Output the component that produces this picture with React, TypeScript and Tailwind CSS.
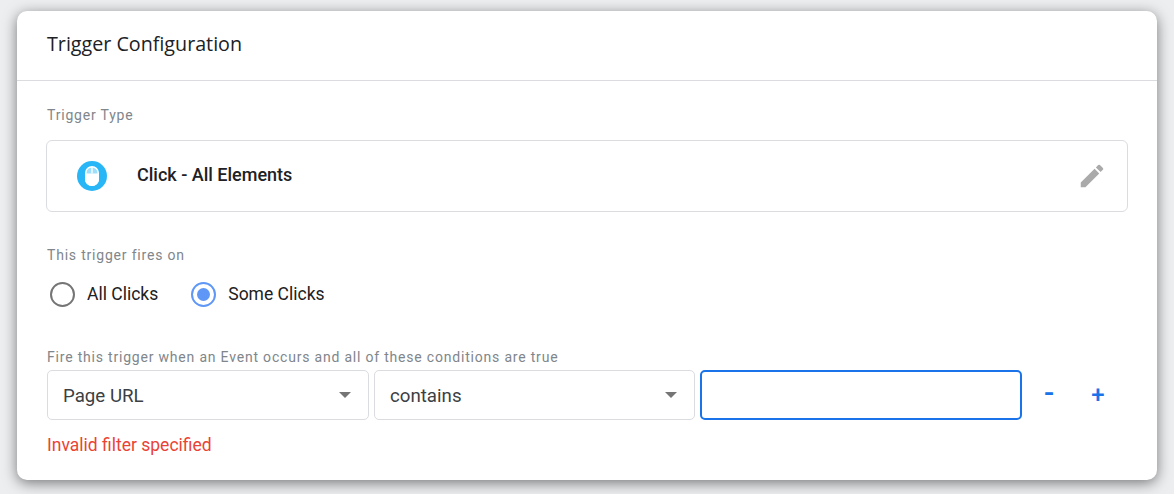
import React from "react";

function Radio({ label, checked }: { label: string; checked?: boolean }) {
  return (
    <div className="flex items-center">
      <div
        className={
          checked
            ? "w-[25px] h-[25px] rounded-full border-2 border-[#5e97f6] flex items-center justify-center"
            : "w-[25px] h-[25px] rounded-full border-2 border-[#757575] flex items-center justify-center"
        }
      >
        {checked && <div className="w-[13px] h-[13px] rounded-full bg-[#5e97f6]" />}
      </div>
      <span className="ml-[12px] text-[17.5px] text-[#212121]">{label}</span>
    </div>
  );
}

function Select({ label, width }: { label: string; width: string }) {
  return (
    <div className={`${width} h-[50px] flex items-center justify-between border border-[#dadce0] rounded-[5px] pl-[15px] pr-[17px]`}>
      <span className="mt-[2px] text-[18.7px] text-[#3c4043]">{label}</span>
      <div className="w-0 h-0 border-l-[6px] border-r-[6px] border-t-[6px] border-l-transparent border-r-transparent border-t-[#757575]" />
    </div>
  );
}

export default function App() {
  return (
    <div className="w-[1174px] h-[494px] overflow-hidden bg-[#eceef0] pt-[11px] pl-[17px] font-['Roboto',sans-serif]">
      <div className="w-[1140px] h-[469px] bg-white rounded-[10px] shadow-[0_3px_14px_rgba(0,0,0,0.5)]">
        <div className="h-[70px] border-b border-[#dadce0] pl-[30px] pt-[20px]">
          <h1 className="text-[19.7px] leading-[26px] text-[#202124] font-['Open_Sans',sans-serif]">Trigger Configuration</h1>
        </div>

        <div className="pl-[30px] pt-[26px]">
          <p className="text-[14px] leading-[16px] text-[#80868b] tracking-[0.8px]">Trigger Type</p>
          <div className="w-[1082px] h-[72px] -ml-px mt-[17px] border border-[#dadce0] rounded-[6px] flex items-center pl-[30px] pr-[20px]">
            <div className="w-[30px] h-[30px] rounded-full bg-[#29b6f6] flex items-center justify-center">
              <svg width="16" height="22" viewBox="0 0 16 22">
                <rect x="1.75" y="1.75" width="12.5" height="18.5" rx="6.25" fill="#fff" fillOpacity="0.55" stroke="#fff" strokeWidth="1.5" />
                <path d="M1 8.5H15V14C15 18 12 21 8 21C4 21 1 18 1 14V8.5Z" fill="#fff" />
                <path d="M8 2V8.5" stroke="#fff" strokeWidth="1.3" />
              </svg>
            </div>
            <span className="ml-[30px] mb-[4px] text-[18px] font-medium text-[#202124]">Click - All Elements</span>
            <svg className="ml-auto" width="30" height="30" viewBox="0 0 24 24" fill="#aaaaaa">
              <path d="M3 17.25V21h3.75L17.81 9.94l-3.75-3.75L3 17.25zM20.71 7.04a1 1 0 0 0 0-1.41l-2.34-2.34a1 1 0 0 0-1.41 0l-1.83 1.83 3.75 3.75 1.83-1.83z" />
            </svg>
          </div>

          <p className="mt-[35px] text-[14px] leading-[16px] text-[#80868b] tracking-[0.8px]">This trigger fires on</p>
          <div className="flex gap-[33px] mt-[18px] ml-[3px]">
            <Radio label="All Clicks" />
            <Radio label="Some Clicks" checked />
          </div>

          <p className="mt-[42px] text-[14px] leading-[16px] text-[#80868b] tracking-[0.8px]">Fire this trigger when an Event occurs and all of these conditions are true</p>
          <div className="flex items-center gap-[5px] mt-[5px]">
            <Select label="Page URL" width="w-[322px]" />
            <Select label="contains" width="w-[321px]" />
            <input className="w-[322px] h-[50px] border-2 border-[#1a73e8] rounded-[5px] outline-none" />
            <button className="w-[44px] text-[30px] leading-[30px] font-medium text-[#1a73e8] -mt-[4px]">-</button>
            <button className="w-[44px] text-[24px] leading-[30px] font-medium text-[#1a73e8]">+</button>
          </div>
          <p className="mt-[14px] text-[17.5px] leading-[22px] text-[#ea4335]">Invalid filter specified</p>
        </div>
      </div>
    </div>
  );
}
